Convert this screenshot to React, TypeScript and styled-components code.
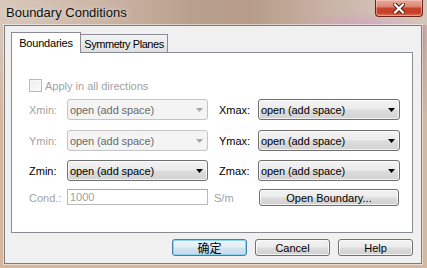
import React from 'react';
import styled, { createGlobalStyle } from 'styled-components';

const Global = createGlobalStyle`
  html, body { margin: 0; padding: 0; }
  body {
    width: 427px; height: 268px; overflow: hidden;
    font-family: "Liberation Sans", Arial, sans-serif;
    font-size: 11px;
    color: #000;
  }
`;

const Window = styled.div`
  width: 427px;
  height: 268px;
  display: flex;
  flex-direction: column;
  background:
    linear-gradient(180deg, rgba(0,0,0,0) 0px, rgba(0,0,0,0) 40px, #d5b69f 120px),
    linear-gradient(90deg, #d7c5b7 0%, #c8b09e 25%, #b69a86 50%, #bfa392 68%, #c9a8b4 86%, #a87c92 98%, #cfb3a5 100%);
`;

const TitleBar = styled.div`
  height: 25px;
  flex: none;
  display: flex;
  align-items: flex-start;
  padding-left: 6px;
  background:
    radial-gradient(ellipse 60px 12px at 360px 24px, rgba(210,150,200,0.55), rgba(210,150,200,0) 100%),
    linear-gradient(90deg, #d8c8bb 0%, #cdb7a7 22%, #b9a08d 45%, #b69c89 58%, #c7b1a2 75%, #d3c2b8 90%, #d6c4ba 100%);
`;

const Title = styled.span`
  font-family: "Liberation Sans", Arial, sans-serif;
  font-size: 13px;
  line-height: 15px;
  padding-top: 5px;
  color: #111;
  text-shadow: 0 0 6px rgba(255, 255, 255, 0.7);
`;

const CloseButton = styled.div`
  margin-left: auto;
  margin-right: 4px;
  width: 48px;
  height: 17px;
  box-sizing: border-box;
  border: 1px solid #6a2419;
  border-top: none;
  border-radius: 0 0 4px 4px;
  background: linear-gradient(180deg, #eaa99a 0%, #dc8a76 40%, #c7462d 52%, #c54027 78%, #dd7558 100%);
  box-shadow: inset 0 0 0 1px rgba(255, 220, 210, 0.45);
  display: flex;
  align-items: center;
  justify-content: center;
`;

const Client = styled.div`
  flex: 1;
  margin: 0 5px 4px 4px;
  border: 1px solid #7c7c7c;
  box-shadow: 0 0 0 1px rgba(255, 255, 255, 0.5);
  background: #f0f0f0;
  display: flex;
  flex-direction: column;
  padding: 6px 8px 7px 6px;
`;

const TabStrip = styled.div`
  height: 20px;
  display: flex;
  align-items: flex-end;
  position: relative;
  z-index: 1;
`;

const Tab = styled.div<{ $active?: boolean; $w: number }>`
  box-sizing: border-box;
  width: ${(p) => p.$w}px;
  height: ${(p) => (p.$active ? 21 : 18)}px;
  margin-bottom: ${(p) => (p.$active ? -1 : 0)}px;
  border: 1px solid #898c95;
  border-bottom: none;
  ${(p) => (p.$active ? '' : 'border-left: none;')}
  background: ${(p) => (p.$active ? '#fff' : 'linear-gradient(180deg, #f3f3f3 0%, #ebebeb 50%, #dedede 100%)')};
  display: flex;
  align-items: center;
  justify-content: center;
  padding-top: ${(p) => (p.$active ? 0 : 1)}px;
  white-space: nowrap;
  letter-spacing: ${(p) => (p.$active ? -0.2 : -0.45)}px;
  color: #000;
`;

const Panel = styled.div`
  height: 181px;
  box-sizing: border-box;
  border: 1px solid #898c95;
  background: #fff;
  padding: 26px 0 0 17px;
  display: flex;
  flex-direction: column;
`;

const CheckRow = styled.div`
  display: flex;
  align-items: center;
  height: 13px;
  gap: 3px;
  color: #a2a2a2;
`;

const CheckBox = styled.div`
  width: 13px;
  height: 13px;
  box-sizing: border-box;
  border: 1px solid #b9b9b9;
  background: linear-gradient(135deg, #ececec 0%, #fafafa 100%);
  box-shadow: inset 0 0 0 1px #f7f7f7;
`;

const FieldRow = styled.div<{ $mt: number; $h: number }>`
  display: grid;
  grid-template-columns: 38px 141px 50px 142px;
  height: ${(p) => p.$h}px;
  margin-top: ${(p) => p.$mt}px;
  align-items: center;
`;

const Label = styled.span<{ $disabled?: boolean; $indent?: number }>`
  color: ${(p) => (p.$disabled ? '#a2a2a2' : '#000')};
  padding-left: ${(p) => p.$indent ?? 0}px;
  white-space: nowrap;
`;

const Combo = styled.div<{ $disabled?: boolean }>`
  height: 21px;
  box-sizing: border-box;
  border: 1px solid ${(p) => (p.$disabled ? '#c4c4c4' : '#707070')};
  border-radius: 3px;
  background: ${(p) =>
    p.$disabled
      ? '#f4f4f4'
      : 'linear-gradient(180deg, #f3f3f3 0%, #ebebeb 48%, #dddddd 52%, #d2d2d2 100%)'};
  box-shadow: ${(p) => (p.$disabled ? 'none' : 'inset 0 0 0 1px rgba(255,255,255,0.7)')};
  display: flex;
  align-items: center;
  justify-content: space-between;
  padding: 0 4px 0 2px;
  color: ${(p) => (p.$disabled ? '#6a6a6a' : '#000')};
  letter-spacing: -0.1px;
  white-space: nowrap;
`;

const TextBox = styled.div`
  height: 16px;
  align-self: start;
  box-sizing: border-box;
  border: 1px solid #b9b9b9;
  border-top-color: #a9a9a9;
  background: #fff;
  display: flex;
  align-items: center;
  padding-left: 2px;
  color: #a2a2a2;
`;

const Button = styled.div<{ $default?: boolean; $w: number; $ml?: number }>`
  width: ${(p) => p.$w}px;
  height: 17px;
  margin-left: ${(p) => p.$ml ?? 0}px;
  box-sizing: border-box;
  border: 1px solid ${(p) => (p.$default ? '#3c7fb1' : '#707070')};
  border-radius: 3px;
  background: ${(p) =>
    p.$default
      ? 'linear-gradient(180deg, #eaf4fa 0%, #e2eef6 48%, #d3e4ef 52%, #c6dbea 100%)'
      : 'linear-gradient(180deg, #f2f2f2 0%, #ebebeb 48%, #dddddd 52%, #cfcfcf 100%)'};
  box-shadow: inset 0 0 0 1px ${(p) => (p.$default ? '#8fd2f3' : 'rgba(255,255,255,0.75)')};
  display: flex;
  align-items: center;
  justify-content: center;
  white-space: nowrap;
  color: #000;
  align-self: start;
`;

const CjkText = styled.span`
  font-family: "Noto Sans CJK SC", "Liberation Sans", sans-serif;
  font-size: 12px;
  line-height: 1;
`;

const Footer = styled.div`
  display: flex;
  justify-content: flex-end;
  gap: 8px;
  margin-top: 6px;
`;

const Arrow = ({ disabled }: { disabled?: boolean }) => (
  <svg width="7" height="4" viewBox="0 0 7 4">
    <polygon points="0,0 7,0 3.5,4" fill={disabled ? '#a6a6a6' : '#000'} />
  </svg>
);

const CloseGlyph = () => (
  <svg width="12" height="11" viewBox="0 0 12 11">
    <path d="M2 1.5 L10 9.5 M10 1.5 L2 9.5" stroke="#4a1a14" strokeWidth="4" strokeLinecap="square" />
    <path d="M2 1.5 L10 9.5 M10 1.5 L2 9.5" stroke="#fff" strokeWidth="2.2" strokeLinecap="square" />
  </svg>
);

const Select = ({ disabled }: { disabled?: boolean }) => (
  <Combo $disabled={disabled}>
    <span>open (add space)</span>
    <Arrow disabled={disabled} />
  </Combo>
);

export default function App() {
  return (
    <>
      <Global />
      <Window>
        <TitleBar>
          <Title>Boundary Conditions</Title>
          <CloseButton>
            <CloseGlyph />
          </CloseButton>
        </TitleBar>
        <Client>
          <TabStrip>
            <Tab $active $w={70}>Boundaries</Tab>
            <Tab $w={87}>Symmetry Planes</Tab>
          </TabStrip>
          <Panel>
            <CheckRow>
              <CheckBox />
              <span>Apply in all directions</span>
            </CheckRow>
            <FieldRow $mt={7} $h={21}>
              <Label $disabled>Xmin:</Label>
              <Select disabled />
              <Label $indent={11}>Xmax:</Label>
              <Select />
            </FieldRow>
            <FieldRow $mt={10} $h={21}>
              <Label $disabled>Ymin:</Label>
              <Select disabled />
              <Label $indent={11}>Ymax:</Label>
              <Select />
            </FieldRow>
            <FieldRow $mt={9} $h={21}>
              <Label>Zmin:</Label>
              <Select />
              <Label $indent={11}>Zmax:</Label>
              <Select />
            </FieldRow>
            <FieldRow $mt={8} $h={17}>
              <Label $disabled>Cond.:</Label>
              <TextBox>1000</TextBox>
              <Label $disabled $indent={6}>S/m</Label>
              <Button $w={140} $ml={1}>Open Boundary...</Button>
            </FieldRow>
          </Panel>
          <Footer>
            <Button $default $w={75}>
              <CjkText>确定</CjkText>
            </Button>
            <Button $w={75}>Cancel</Button>
            <Button $w={75}>Help</Button>
          </Footer>
        </Client>
      </Window>
    </>
  );
}
